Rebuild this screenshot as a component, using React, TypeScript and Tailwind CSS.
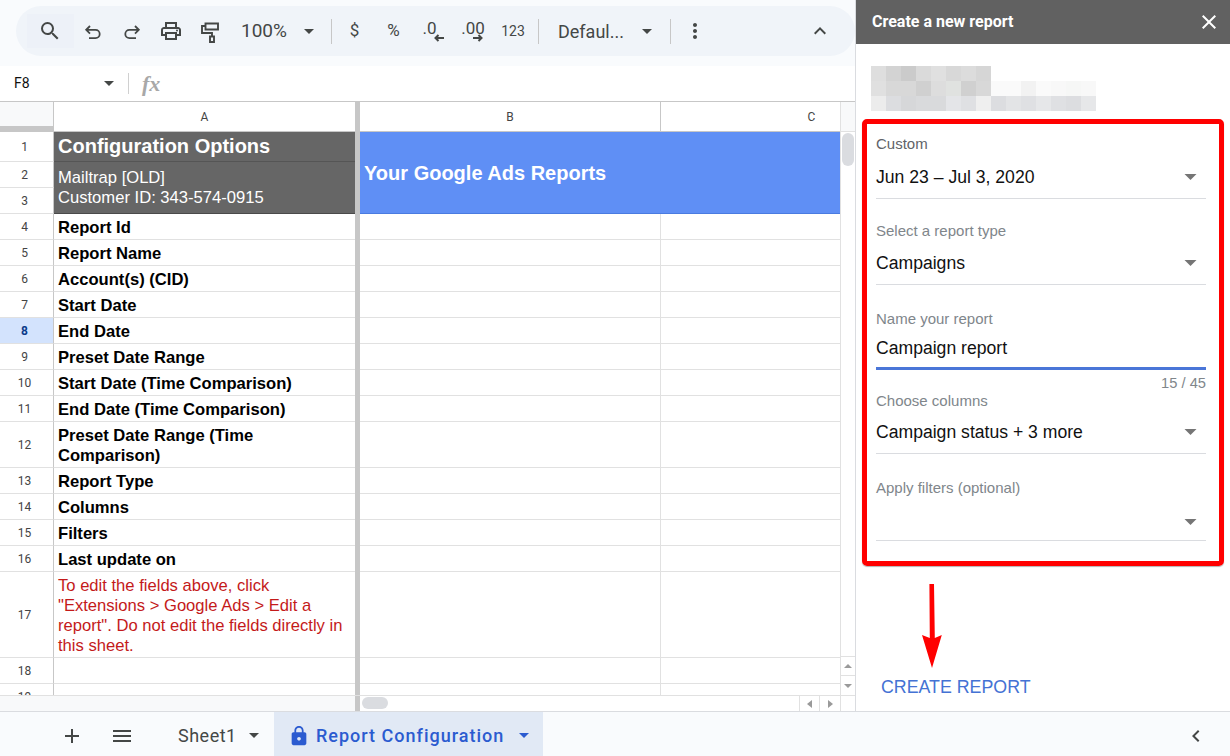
import React from 'react'
import {
  MdAdd,
  MdChevronLeft,
  MdClose,
  MdExpandLess,
  MdLock,
  MdMenu,
  MdMoreVert,
  MdOutlinePrint,
  MdSearch,
} from 'react-icons/md'

const rows = [
  { n: '4', label: 'Report Id', h: 'h-[26px]' },
  { n: '5', label: 'Report Name', h: 'h-[26px]' },
  { n: '6', label: 'Account(s) (CID)', h: 'h-[26px]' },
  { n: '7', label: 'Start Date', h: 'h-[26px]' },
  { n: '8', label: 'End Date', h: 'h-[26px]', active: true },
  { n: '9', label: 'Preset Date Range', h: 'h-[26px]' },
  { n: '10', label: 'Start Date (Time Comparison)', h: 'h-[26px]' },
  { n: '11', label: 'End Date (Time Comparison)', h: 'h-[26px]' },
  { n: '12', label: 'Preset Date Range (Time Comparison)', h: 'h-[46px]' },
  { n: '13', label: 'Report Type', h: 'h-[26px]' },
  { n: '14', label: 'Columns', h: 'h-[26px]' },
  { n: '15', label: 'Filters', h: 'h-[26px]' },
  { n: '16', label: 'Last update on', h: 'h-[26px]' },
]

const blurCells = [
  ['bg-[#dedede]', 'bg-[#d3d3d3]', 'bg-[#cbcbcb]', 'bg-[#dadada]', 'bg-[#e0e0e0]', 'bg-[#d8d8d8]', 'bg-[#dcdcdc]', 'bg-[#d6d6d6]'],
  ['bg-[#e0e0e0]', 'bg-[#d8d8d8]', 'bg-[#d8d8d8]', 'bg-[#d0d0d0]', 'bg-[#dddddd]', 'bg-[#e0e2e0]', 'bg-[#d0d0d0]', 'bg-[#d8d8d8]', 'bg-[#fafafa]', 'bg-[#fafafa]', 'bg-[#f2f2f2]', 'bg-[#fafafa]', 'bg-[#f8f8f8]', 'bg-[#f6f7f6]', 'bg-[#f8f8f8]'],
  ['bg-[#ececec]', 'bg-[#dcdde0]', 'bg-[#d6d7d9]', 'bg-[#d9dadc]', 'bg-[#d9dadc]', 'bg-[#e4e5e8]', 'bg-[#dfe0e3]', 'bg-[#efefef]', 'bg-[#dcdde0]', 'bg-[#e3e4e6]', 'bg-[#dfe0e3]', 'bg-[#e6e7e9]', 'bg-[#dfe0e3]', 'bg-[#dcdde0]', 'bg-[#e6e7e9]'],
]

function Caret({ className }: { className: string }) {
  return (
    <svg viewBox="0 0 10 5" className={className} fill="currentColor">
      <path d="M0 0h10L5 5z" />
    </svg>
  )
}

function SideTriangle({ dir }: { dir: 'left' | 'right' }) {
  return (
    <svg viewBox="0 0 5 8" className="h-[8px] w-[5px] text-[#9a9a9a]" fill="currentColor">
      <path d={dir === 'left' ? 'M5 0v8L0 4z' : 'M0 0v8l5-4z'} />
    </svg>
  )
}

function UndoIcon() {
  return (
    <svg viewBox="0 0 24 24" className="h-[24px] w-[24px]" fill="none" stroke="currentColor" strokeWidth="1.8">
      <path d="M9 7 5.2 10.8 9 14.6M5.2 10.8h9.3a4.2 4.2 0 0 1 0 8.4H8" />
    </svg>
  )
}

function RedoIcon() {
  return (
    <svg viewBox="0 0 24 24" className="h-[24px] w-[24px]" fill="none" stroke="currentColor" strokeWidth="1.8">
      <path d="M15 7l3.8 3.8L15 14.6M18.8 10.8H9.5a4.2 4.2 0 0 0 0 8.4H16" />
    </svg>
  )
}

function PaintIcon() {
  return (
    <svg viewBox="0 0 24 24" className="h-[24px] w-[24px]" fill="none" stroke="currentColor" strokeWidth="1.9">
      <path d="M7.5 4.5h12.5v6H7.5z" />
      <path d="M7.5 7H4v7h10v3.5" />
      <path d="M12 17.5h4V23h-4z" />
    </svg>
  )
}

function Separator() {
  return <div className="h-[25px] w-px bg-[#c7c7c7]" />
}

function Toolbar() {
  return (
    <div className="flex h-[66px] items-start bg-[#f9fbfd] pl-[16px] pt-[6px]">
      <div className="flex h-[50px] w-[839px] items-center rounded-l-[25px] rounded-r-[25px] bg-[#f0f4f9] pl-[11px] text-[#444746]">
        <div className="flex h-[34px] w-[47px] items-center justify-center bg-[#edf1f8] pr-px">
          <MdSearch size={24} />
        </div>
        <div className="flex w-[38px] justify-center"><UndoIcon /></div>
        <div className="flex w-[39px] justify-center"><RedoIcon /></div>
        <div className="flex w-[40px] justify-center"><MdOutlinePrint size={24} /></div>
        <div className="flex w-[38px] justify-center"><PaintIcon /></div>
        <span className="ml-[12px] w-[46px] font-['Roboto',sans-serif] text-[19px]">100%</span>
        <div className="flex w-[44px] justify-center"><Caret className="h-[5px] w-[10px]" /></div>
        <Separator />
        <div className="ml-[3px] w-[39px] text-center font-['Roboto',sans-serif] text-[17px]">$</div>
        <div className="w-[39px] text-center font-['Roboto',sans-serif] text-[17px]">%</div>
        <div className="relative w-[39px] pr-[6px] text-center font-['Roboto',sans-serif] text-[17px] leading-none">
          <span className="relative -top-[3px]">.0</span>
          <svg viewBox="0 0 10 8" className="absolute left-[21px] top-[11px] h-[8px] w-[10px]" fill="none" stroke="currentColor" strokeWidth="2">
            <path d="M10 4H1.5M4.5 1 1.5 4l3 3" />
          </svg>
        </div>
        <div className="relative ml-px w-[40px] text-center font-['Roboto',sans-serif] text-[17px] leading-none">
          <span className="relative -top-[3px]">.00</span>
          <svg viewBox="0 0 10 8" className="absolute left-[20px] top-[11px] h-[8px] w-[10px]" fill="none" stroke="currentColor" strokeWidth="2">
            <path d="M0 4h8.5M5.5 1l3 3-3 3" />
          </svg>
        </div>
        <div className="w-[40px] text-center font-['Roboto',sans-serif] text-[14px]">123</div>
        <div className="ml-[5px]"><Separator /></div>
        <span className="ml-[19px] w-[68px] font-['Roboto',sans-serif] text-[18px]">Defaul...</span>
        <div className="ml-[16px] flex"><Caret className="h-[5px] w-[10px]" /></div>
        <div className="ml-[18px]"><Separator /></div>
        <div className="ml-[12px] flex w-[24px] justify-center"><MdMoreVert size={24} /></div>
        <div className="ml-[101px] flex w-[24px] justify-center"><MdExpandLess size={26} /></div>
      </div>
    </div>
  )
}

function FormulaBar() {
  return (
    <div className="flex h-[36px] items-center border-b border-[#c7c7c7] bg-white">
      <span className="ml-[14px] w-[90px] font-['Roboto',sans-serif] text-[14px] text-[#111]">F8</span>
      <Caret className="h-[5px] w-[10px] text-[#444746]" />
      <div className="ml-[14px] h-[21px] w-px bg-[#d0d0d0]" />
      <span className="ml-[13px] font-['Liberation_Serif',serif] text-[22px] font-bold italic text-[#a8a8a8]">fx</span>
    </div>
  )
}

function ColumnHeaders() {
  return (
    <div className="flex h-[30px] border-b border-[#c7c7c7] font-['Roboto',sans-serif] text-[12px] text-[#444]">
      <div className="flex w-[54px] flex-col justify-end border-r border-[#c7c7c7] bg-[#f8f9fa]">
        <div className="h-[5px] bg-[#c7c7c7]" />
      </div>
      <div className="flex w-[301px] items-center justify-center">A</div>
      <div className="w-[5px] bg-[#c7c7c7]" />
      <div className="flex w-[301px] items-center justify-center border-r border-[#c7c7c7]">B</div>
      <div className="flex w-[179px] items-center justify-center pl-[122px]">C</div>
    </div>
  )
}

function RowNumber({ n, h, active }: { n: string; h: string; active?: boolean }) {
  return (
    <div
      className={`flex w-[54px] shrink-0 items-center justify-center border-r border-b border-r-[#c7c7c7] border-b-[#e1e1e1] pr-[4px] pt-px font-['Roboto',sans-serif] text-[12px] ${h} ${
        active ? 'bg-[#d3e3fd] font-bold text-[#0b3a8a]' : 'text-[#444]'
      }`}
    >
      {n}
    </div>
  )
}

function DataRow({ n, h, active, children, danger }: { n: string; h: string; active?: boolean; children?: React.ReactNode; danger?: boolean }) {
  return (
    <div className="flex">
      <RowNumber n={n} h={h} active={active} />
      <div
        className={`flex w-[301px] items-center border-b border-[#e1e1e1] px-[4px] pt-[2px] font-['Liberation_Sans',sans-serif] text-[16.6px] leading-[20px] ${h} ${
          danger ? 'text-[#c41a1a]' : 'font-bold text-black'
        }`}
      >
        <div>{children}</div>
      </div>
      <div className={`w-[5px] bg-[#c7c7c7] ${h}`} />
      <div className={`w-[301px] border-r border-b border-r-[#e1e1e1] border-b-[#e1e1e1] ${h}`} />
      <div className={`w-[179px] border-b border-[#e1e1e1] ${h}`} />
    </div>
  )
}

function Sheet() {
  return (
    <div className="flex h-0 min-h-0 flex-1">
      <div className="w-[840px] overflow-hidden">
        <ColumnHeaders />
        <div className="flex">
          <div>
            <RowNumber n="1" h="h-[30px]" />
            <RowNumber n="2" h="h-[26px]" />
            <RowNumber n="3" h="h-[26px]" />
          </div>
          <div className="w-[301px] border-b border-[#4a4a4a] bg-[#666666] font-['Liberation_Sans',sans-serif] text-white">
            <div className="flex h-[30px] items-center border-b border-[#555] px-[4px] pb-[2px] text-[20px] font-bold">Configuration Options</div>
            <div className="px-[4px] pt-[6px] text-[16.6px] leading-[20px]">
              <div>Mailtrap [OLD]</div>
              <div>Customer ID: 343-574-0915</div>
            </div>
          </div>
          <div className="w-[5px] bg-[#c7c7c7]" />
          <div className="flex h-[82px] w-[480px] items-center border-b border-[#4a7be0] bg-[#5f8ff5] px-[4px] font-['Liberation_Sans',sans-serif] text-[20px] font-bold text-white">
            Your Google Ads Reports
          </div>
        </div>
        {rows.map((r) => (
          <DataRow key={r.n} n={r.n} h={r.h} active={r.active}>
            {r.label}
          </DataRow>
        ))}
        <DataRow n="17" h="h-[86px]" danger>
          To edit the fields above, click "Extensions &gt; Google Ads &gt; Edit a report". Do not edit the fields directly in this sheet.
        </DataRow>
        <DataRow n="18" h="h-[26px]" />
        <DataRow n="19" h="h-[26px]" />
      </div>
      <div className="flex w-[15px] flex-col border-l border-[#e1e1e1] bg-white">
        <div className="h-[30px] border-b border-[#e1e1e1] bg-[#f8f9fa]" />
        <div className="mx-[1px] mt-[1px] h-[33px] rounded-[6px] bg-[#dadce0]" />
        <div className="mt-auto flex h-[20px] items-center justify-center border-y border-[#e1e1e1]">
          <Caret className="h-[4px] w-[8px] rotate-180 text-[#9a9a9a]" />
        </div>
        <div className="flex h-[19px] items-center justify-center">
          <Caret className="h-[4px] w-[8px] text-[#9a9a9a]" />
        </div>
      </div>
    </div>
  )
}

function HorizontalScroll() {
  return (
    <div className="flex h-[16px] border-t border-[#e1e1e1] bg-white">
      <div className="w-[355px] bg-[#f8f9fa]" />
      <div className="w-[5px] bg-[#c7c7c7]" />
      <div className="ml-[2px] mt-[1px] h-[12px] w-[26px] rounded-[6px] bg-[#dadce0]" />
      <div className="ml-auto flex w-[41px] border-l border-[#e1e1e1]">
        <div className="flex w-[20px] items-center justify-center border-r border-[#e1e1e1]">
          <SideTriangle dir="left" />
        </div>
        <div className="flex w-[20px] items-center justify-center">
          <SideTriangle dir="right" />
        </div>
      </div>
      <div className="w-[15px] border-l border-[#e1e1e1]" />
    </div>
  )
}

function Field({ label, value, labelClass, valueClass }: { label: string; value?: string; labelClass: string; valueClass: string }) {
  return (
    <div>
      <div className={`font-['Liberation_Sans',sans-serif] text-[15px] leading-[16px] ${labelClass}`}>{label}</div>
      <div className={`flex items-center justify-between border-b border-[#dadce0] pr-[9px] ${valueClass}`}>
        <span className="font-['Liberation_Sans',sans-serif] text-[17.6px] leading-[22px] text-[#111]">{value}</span>
        <Caret className="h-[6px] w-[13px] text-[#757575]" />
      </div>
    </div>
  )
}

function Sidebar() {
  return (
    <div className="flex w-[375px] flex-col border-l border-[#dadce0] bg-white">
      <div className="flex h-[44px] shrink-0 items-center justify-between bg-[#616161] pl-[16px] pr-[9px] text-white">
        <span className="font-['Roboto',sans-serif] text-[16px] font-bold">Create a new report</span>
        <MdClose size={24} />
      </div>
      <div className="ml-[15px] mt-[22px] h-[45px] w-[225px]">
        {blurCells.map((line, i) => (
          <div key={i} className="flex h-[15px]">
            {line.map((c, j) => (
              <div key={j} className={`h-[15px] w-[15px] ${c}`} />
            ))}
          </div>
        ))}
      </div>
      <div className="ml-[6px] mt-[8px] h-[447px] w-[362px] rounded-[5px] border-[5px] border-[#ff0000] pl-[9px] pr-[13px] pt-[12px] shadow-[0_1px_1px_rgba(0,0,0,0.3)]">
        <Field label="Custom" value="Jun 23 – Jul 3, 2020" labelClass="text-[#5f6368]" valueClass="mt-[14px] pb-[10px]" />
        <div className="mt-[24px]">
          <Field label="Select a report type" value="Campaigns" labelClass="text-[#80868b]" valueClass="mt-[13px] pb-[10px]" />
        </div>
        <div className="mt-[26px] font-['Liberation_Sans',sans-serif] text-[15px] leading-[16px] text-[#80868b]">Name your report</div>
        <div className="mt-[10px] h-[33px] border-b-[3px] border-[#4a76d8] font-['Liberation_Sans',sans-serif] text-[17.6px] leading-[22px] text-[#111]">
          Campaign report
        </div>
        <div className="mt-[5px] text-right font-['Liberation_Sans',sans-serif] text-[14.7px] leading-[16px] text-[#80868b]">15 / 45</div>
        <Field label="Choose columns" value="Campaign status + 3 more" labelClass="mt-[2px] text-[#80868b]" valueClass="mt-[12px] pb-[10px]" />
        <div className="mt-[26px]">
          <Field label="Apply filters (optional)" labelClass="text-[#80868b]" valueClass="mt-[12px] h-[33px] pb-[4px]" />
        </div>
      </div>
      <svg viewBox="0 0 20 84" className="ml-[66px] mt-[18px] h-[84px] w-[20px] shrink-0" fill="#ff0000">
        <path d="M7.4 0h4.6l.8 54 7 -3 -9.8 33L0 51l7.8 3z" />
      </svg>
      <div className="ml-[25px] mt-[8px] font-['Liberation_Sans',sans-serif] text-[17.8px] leading-[22px] text-[#4472d4]">CREATE REPORT</div>
    </div>
  )
}

function BottomBar() {
  return (
    <div className="flex h-[45px] shrink-0 border-t border-[#dadce0] bg-[#f9fbfd] text-[#444746]">
      <div className="flex items-center pt-[3px]">
        <div className="ml-[60px] flex w-[24px] justify-center"><MdAdd size={24} /></div>
        <div className="ml-[26px] flex w-[24px] justify-center"><MdMenu size={24} /></div>
        <span className="ml-[44px] w-[58px] font-['Roboto',sans-serif] text-[18px] tracking-[0.5px]">Sheet1</span>
        <Caret className="ml-[13px] h-[5px] w-[10px]" />
      </div>
      <div className="ml-[15px] flex w-[269px] items-center bg-[#e1e9f5] pt-[3px] text-[#2b5bd0]">
        <MdLock size={22} className="ml-[14px]" />
        <span className="ml-[6px] w-[190px] whitespace-nowrap font-['Roboto',sans-serif] text-[18px] font-medium tracking-[1px]">Report Configuration</span>
        <Caret className="ml-[13px] h-[5px] w-[10px]" />
      </div>
      <div className="ml-auto mr-[22px] flex items-center pt-[3px]"><MdChevronLeft size={24} /></div>
    </div>
  )
}

export default function App() {
  return (
    <div className="flex h-[756px] w-[1230px] flex-col overflow-hidden bg-white">
      <div className="flex min-h-0 flex-1">
        <div className="flex w-[855px] flex-col">
          <Toolbar />
          <FormulaBar />
          <Sheet />
          <HorizontalScroll />
        </div>
        <Sidebar />
      </div>
      <BottomBar />
    </div>
  )
}
